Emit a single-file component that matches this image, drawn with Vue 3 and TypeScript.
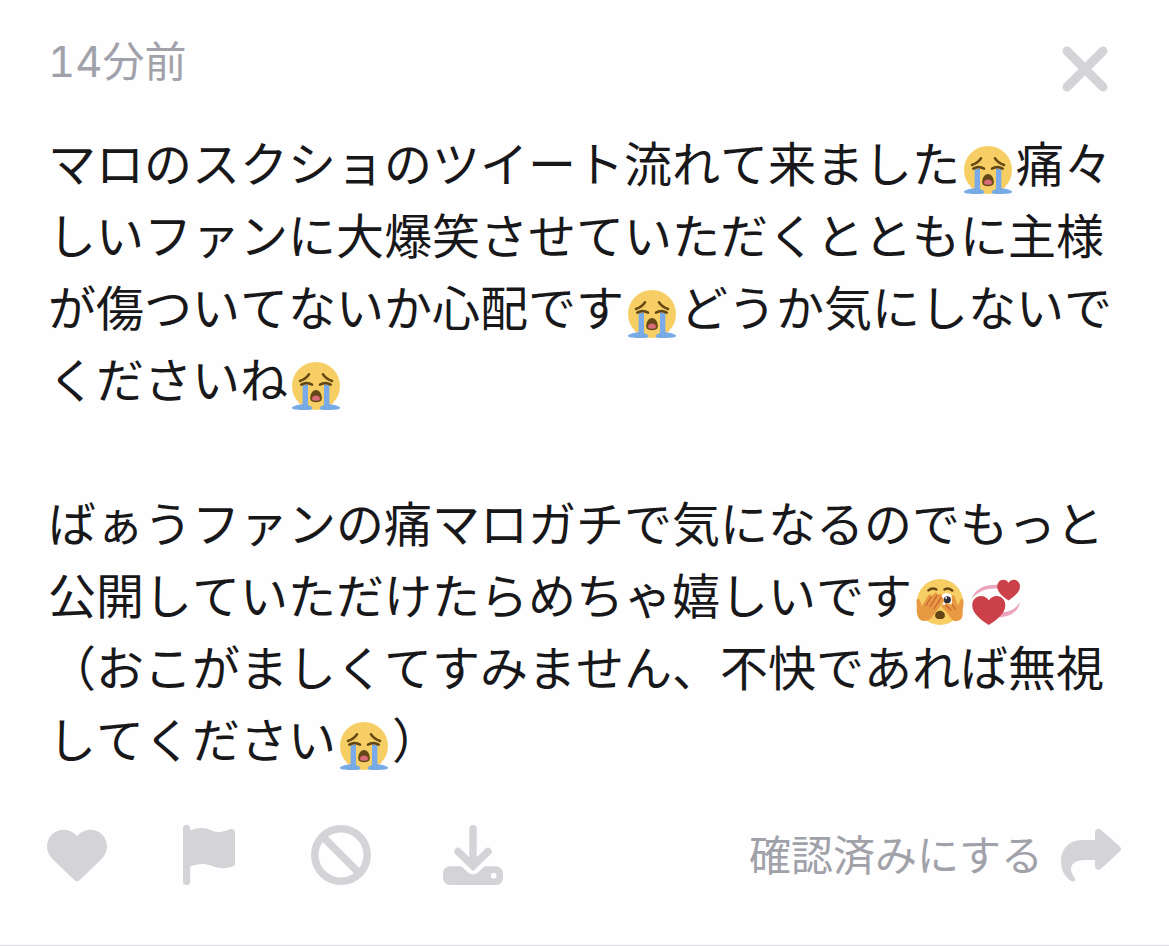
<script setup lang="ts">
import { ref } from 'vue'

type Emoji = 'cry' | 'peek' | 'hearts'
interface Segment {
  text?: string
  emoji?: Emoji
  label?: string
}

const cry: Segment = { emoji: 'cry', label: '大泣き' }

const paragraphs: Segment[][] = [
  [
    { text: 'マロのスクショのツイート流れて来ました' },
    cry,
    { text: '痛々しいファンに大爆笑させていただくとともに主様が傷ついてないか心配です' },
    cry,
    { text: 'どうか気にしないでくださいね' },
    cry,
  ],
  [],
  [
    { text: 'ばぁうファンの痛マロガチで気になるのでもっと公開していただけたらめちゃ嬉しいです' },
    { emoji: 'peek', label: '指の間からのぞく顔' },
    { emoji: 'hearts', label: '回るハート' },
  ],
  [
    { text: '（おこがましくてすみません、不快であれば無視してください' },
    cry,
    { text: '）' },
  ],
]

const visible = ref(true)
</script>

<template>
  <article v-if="visible" class="message">
    <header class="head">
      <time class="time">14分前</time>
      <button class="icon-button close" type="button" aria-label="閉じる" @click="visible = false">
        <svg viewBox="0 0 48 48" aria-hidden="true">
          <path d="M6 6 42 42M42 6 6 42" fill="none" stroke="currentColor" stroke-width="9" stroke-linecap="round" />
        </svg>
      </button>
    </header>

    <div class="body">
      <p v-for="(paragraph, i) in paragraphs" :key="i" class="line">
        <template v-for="(segment, j) in paragraph" :key="j">
          <svg v-if="segment.emoji === 'cry'" class="emoji" viewBox="0 0 36 36" role="img" :aria-label="segment.label">
            <circle cx="18" cy="18" r="18" fill="#f6ce63" />
            <path d="M8 17h4v15.200c2 .6 3.200 1.500 3.200 2.500 0 .9-1.200 1.300-3.200 1.300H8c-4.500 0-8-.5-8-1.500C0 33.200 3.500 32.200 8 31.700ZM28 17h-4v15.200c-2 .6-3.200 1.500-3.200 2.500 0 .9 1.200 1.300 3.200 1.300h4c4.500 0 8-.5 8-1.500 0-1.300-3.500-2.300-8-2.800Z" fill="#77aae7" />
            <g fill="none" stroke="#654716" stroke-width="2" stroke-linecap="round" stroke-linejoin="round">
              <path d="M6 14.200C9 13.200 11.300 11.500 12.700 9.300M30 14.200C27 13.200 24.700 11.500 23.300 9.300" />
              <path d="M7 17C9.500 15.600 12.500 15.600 15 17M21 17C23.500 15.600 26.500 15.600 29 17" />
            </g>
            <path d="M18 21c-2.700 0-4.300 3-4.300 6 0 2.200 1.300 3.100 4.300 3.100s4.300-.9 4.300-3.100c0-3-1.600-6-4.300-6Z" fill="#654716" />
            <path d="M18 25.200c-2 0-3 1.200-3 2.400 0 1.100 1.100 1.500 3 1.500s3-.4 3-1.500c0-1.200-1-2.400-3-2.400Z" fill="#d96a78" />
          </svg>
          <svg v-else-if="segment.emoji === 'peek'" class="emoji" viewBox="0 0 36 36" role="img" :aria-label="segment.label">
            <circle cx="18" cy="18" r="17.300" fill="#f6ce63" />
            <path d="M9.300 9.300C11 7.800 13.500 7.600 15.300 8.600M21.300 8.600C23.200 7.600 25.600 7.800 27.200 9.500" fill="none" stroke="#654716" stroke-width="1.800" stroke-linecap="round" />
            <ellipse cx="23" cy="16" rx="4.500" ry="4.800" fill="#fff" />
            <circle cx="23.500" cy="16.300" r="2.700" fill="#292f3a" />
            <circle cx="22.600" cy="15" r=".7" fill="#fff" />
            <path d="M18 24.500c-2.300 0-3.700 1.800-3.700 3.800 0 1.700 1.500 2.500 3.700 2.500s3.700-.8 3.700-2.500c0-2-1.400-3.800-3.700-3.800Z" fill="#654716" />
            <path d="M.3 17.500c0-2.200 2.100-2.800 2.700-.6l1.500 4L9 13.300c1-1.600 2.700-.7 2.300.8l2.200-2.500c1.200-1.300 3-.2 2.300 1.200l2-.8c1.500-.4 2.200 1.100 1.300 2.300l1.500 1c1 .9.700 2-.1 2.900l-7.400 9.800C10.500 33 3.500 34 1.500 29 0 25.500 1 22 .3 17.500Z" fill="#e89a43" />
            <path d="M35.700 17.500c0-2.200-2-2.600-2.700-.6l-1.500 4L29 14c-.7-2-2.500-1.300-2.300.4l.5 6.100-3.500-1.500c-1.400-.6-2.500.4-1.500 1.500L20.500 20c-1.400.3-1.600 1.500-.6 2.300l3.100 3.200c3 5 5 7.500 8 6.800 4.500-1 4-4.500 4-7.300 0-2 .9-4.500.7-7.500Z" fill="#e89a43" />
            <path d="M11.300 14.100 7.500 20.500M15.800 13 10.500 21.500M19 14.500 13.500 23M27.200 20l2.300 3.500M22.200 20.500l4 3.500" fill="none" stroke="#c96635" stroke-width="1" stroke-linecap="round" />
          </svg>
          <svg v-else-if="segment.emoji === 'hearts'" class="emoji" viewBox="0 0 36 36" role="img" :aria-label="segment.label">
            <path d="M0 15.500C2 8.500 9 4.500 20 5.200L19.500 8C12 7.500 5 9.500 0 15.500Z" fill="#eba5bd" />
            <path d="M36 18c-1 7-7 11-16.500 11.500l3-3.700C28.500 25.500 33 23 36 18Z" fill="#eba5bd" />
            <path d="M36 6.300c0-2.700-2-4.900-4.600-4.900-1.700 0-3.100.9-4 2.200-.8-1.300-2.200-2.200-3.900-2.200-2.600 0-4.600 2.200-4.600 4.900 0 4.200 4.400 7.700 8.500 10.500C31.600 14 36 10.500 36 6.300Z" fill="#cc4049" />
            <path d="M25 20.500c0-4-2.800-7-6.400-7-2.500 0-4.700 1.300-6 3.300-1.200-2-3.400-3.300-5.900-3.300-3.700 0-6.500 3-6.500 7 0 6.300 6.500 10.900 12.400 14.800C18.500 31.400 25 26.800 25 20.500Z" fill="#cc4049" />
          </svg>
          <template v-else>{{ segment.text }}</template>
        </template>
      </p>
    </div>

    <footer class="foot">
      <div class="actions">
        <button class="icon-button" type="button" aria-label="お気に入り">
          <svg viewBox="0 0 60 60" fill="currentColor" aria-hidden="true">
            <path d="M30 11C26.500 7 21.500 4.700 17 4.700 7.500 4.700 0 12 0 21.500c0 5 2 9 5.500 12.500L27 54.800c2 2 4 2 6 0L54.500 34C58 30.500 60 26.500 60 21.500 60 12 52.500 4.700 43 4.700c-4.500 0-9.500 2.300-13 6.300Z" />
          </svg>
        </button>
        <button class="icon-button" type="button" aria-label="報告">
          <svg viewBox="0 0 60 60" fill="currentColor" aria-hidden="true">
            <path d="M4 3.500a3.600 3.600 0 0 1 7.200 0V5.400C20 2 26 2.500 32 5.200c7 3.200 12 2 18-.6 3.500-1.500 6 .5 6 3.400v30.500c0 1.500-1 2.500-2.500 3-8 2.800-14 2-21-.8-7-2.700-14-2.300-21.300.7v15.100a3.600 3.600 0 0 1-7.200 0Z" />
          </svg>
        </button>
        <button class="icon-button" type="button" aria-label="ブロック">
          <svg viewBox="0 0 60 60" fill="none" stroke="currentColor" stroke-width="7.500" aria-hidden="true">
            <circle cx="30" cy="30" r="26.200" />
            <path d="M11.500 11.500 48.500 48.500" />
          </svg>
        </button>
        <button class="icon-button" type="button" aria-label="ダウンロード">
          <svg viewBox="0 0 60 60" aria-hidden="true">
            <path d="M30 3.700V40M15 26.500 30 41 45 26.500" fill="none" stroke="currentColor" stroke-width="7.400" stroke-linecap="round" stroke-linejoin="miter" />
            <path fill="currentColor" fill-rule="evenodd" d="M7.500 41.300H17c1 0 1.700.3 2.400.9l5.400 5c3 2.800 7.400 2.800 10.400 0l5.400-5c.7-.6 1.400-.9 2.400-.9h9.500C57 41.300 60 44.500 60 49v3.500c0 4.500-3 7.500-7.500 7.500h-45C3 60 0 57 0 52.500V49c0-4.500 3-7.700 7.500-7.700ZM50.700 47.800a2.900 2.900 0 1 0 0 5.800 2.900 2.900 0 0 0 0-5.800Z" />
          </svg>
        </button>
      </div>
      <button class="done" type="button">
        <span class="done-label">確認済みにする</span>
        <svg viewBox="0 0 60 60" fill="currentColor" aria-hidden="true">
          <path d="M34 7c0-3 3.500-4.500 6-2.300L58.800 21.500c1.600 1.500 1.600 3.500 0 5L40 43.800c-2.500 2.200-6 .7-6-2.300V35H23.500C14.500 35 10 39 10 44.500c0 3 1.500 5 3.700 8.300 1.600 2.300-.5 4.600-3 3.400C4 52.500 0 45 0 36.500 0 23.500 8.500 15 21.500 15H34Z" />
        </svg>
      </button>
    </footer>
  </article>
</template>

<style>
body {
  margin: 0;
  background: #fefefe;
}
</style>

<style scoped>
.message {
  box-sizing: border-box;
  min-height: 100vh;
  display: flex;
  flex-direction: column;
  padding: 32px 48px 58px;
  border-bottom: 1px solid #dedee1;
  color: #18181b;
  font-family: 'Noto Sans CJK JP', sans-serif;
  font-kerning: none;
}

.head {
  display: flex;
  align-items: flex-start;
  justify-content: space-between;
  height: 61px;
  margin-bottom: 32px;
}

.time {
  color: #a1a1aa;
  font-family: Inter, 'Noto Sans CJK JP', sans-serif;
  font-size: 42px;
  font-variant-numeric: tabular-nums;
  line-height: 60px;
}

.icon-button,
.done {
  margin: 0;
  padding: 0;
  border: 0;
  background: none;
  font: inherit;
  font-kerning: none;
  cursor: pointer;
}

.icon-button {
  display: block;
  width: 60px;
  height: 60px;
  color: #d4d4d8;
}

.icon-button svg,
.done svg {
  display: block;
  width: 100%;
}

.close {
  width: 48px;
  height: 48px;
  align-self: flex-end;
  margin-right: 12px;
}

.line {
  min-height: 72px;
  margin: 0;
  font-size: 48px;
  line-height: 72px;
}

.emoji {
  width: 48px;
  height: 48px;
  margin: 0 4px;
  vertical-align: -12px;
}

.foot {
  display: flex;
  align-items: center;
  justify-content: space-between;
  margin-top: 52px;
  padding-left: 0;
  margin-left: -1px;
}

.actions {
  display: flex;
  gap: 72px;
}

.done {
  display: flex;
  align-items: center;
  gap: 18px;
  color: #a1a1aa;
  font-size: 42px;
  line-height: 56px;
}

.done-label {
  padding-bottom: 4px;
}

.done svg {
  width: 60px;
  height: 60px;
  color: #d4d4d8;
}
</style>
